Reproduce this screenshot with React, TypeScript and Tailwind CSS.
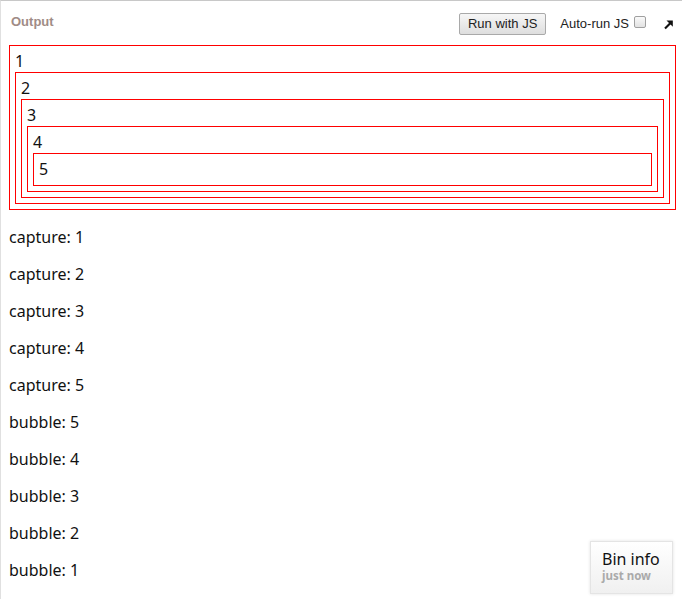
import React from "react";

function Box({ n, children }: { n: number; children?: React.ReactNode }) {
  return (
    <div className="border border-[#ff0000] px-[5px] pb-[5px] pt-[5px]">
      <div className="h-[21px] leading-[21px]">{n}</div>
      {children}
    </div>
  );
}

export default function App() {
  const lines = [
    "capture: 1",
    "capture: 2",
    "capture: 3",
    "capture: 4",
    "capture: 5",
    "bubble: 5",
    "bubble: 4",
    "bubble: 3",
    "bubble: 2",
    "bubble: 1",
  ];
  return (
    <div className="relative w-[682px] h-[599px] overflow-hidden bg-white border-t border-t-[#c8c8c8] border-l border-l-[#e0e0e0]">
      <div className="flex items-center h-[36px] pl-[10px] pr-[8px] pt-[12px] pb-[2px]" style={{ fontFamily: '"Liberation Sans", Arial, sans-serif' }}>
        <div className="text-[13px] font-bold text-[#a08c86] mt-[-4px]">Output</div>
        <div className="flex-1" />
        <button className="h-[22px] px-[8px] text-[13px] text-[#222] border border-[#a9a9a9] rounded-[2px] bg-gradient-to-b from-[#f6f6f6] to-[#dedede] leading-[20px]">
          Run with JS
        </button>
        <span className="ml-[14px] text-[13px] text-[#222]">Auto-run JS</span>
        <span className="ml-[5px] w-[12px] h-[12px] border border-[#a0a0a0] rounded-[2px] bg-gradient-to-b from-[#fafafa] to-[#e2e2e2] mb-[4px]" />
        <svg className="ml-[17px]" width="11" height="11" viewBox="0 0 11 11">
          <path d="M2 9.5 L8.5 3" stroke="#111" strokeWidth="2.2" />
          <path d="M3.5 1.5 H9.8 V7.8 Z" fill="#111" />
        </svg>
      </div>
      <div className="pl-[8px] pr-[6px] pt-[8px] text-[16px] text-[#111]" style={{ fontFamily: '"Noto Sans", "Open Sans", sans-serif' }}>
        <Box n={1}>
          <Box n={2}>
            <Box n={3}>
              <Box n={4}>
                <Box n={5} />
              </Box>
            </Box>
          </Box>
        </Box>
        <div className="h-[1px]" />
        {lines.map((l) => (
          <p key={l} className="my-[16px] leading-[21px] text-[16px]">
            {l}
          </p>
        ))}
      </div>
      <div className="absolute left-[589px] top-[540px] w-[83px] h-[53px] border border-[#e4e4e4] bg-gradient-to-b from-white to-[#f0f0f0] shadow-[0_0_3px_rgba(0,0,0,0.12)] pl-[11px] pt-[8px]">
        <div className="text-[16px] leading-[19px] text-[#111]" style={{ fontFamily: '"Noto Sans", sans-serif' }}>Bin info</div>
        <div className="text-[11.5px] font-bold leading-[14px] text-[#aaa]" style={{ fontFamily: '"Noto Sans", sans-serif' }}>just now</div>
      </div>
    </div>
  );
}
